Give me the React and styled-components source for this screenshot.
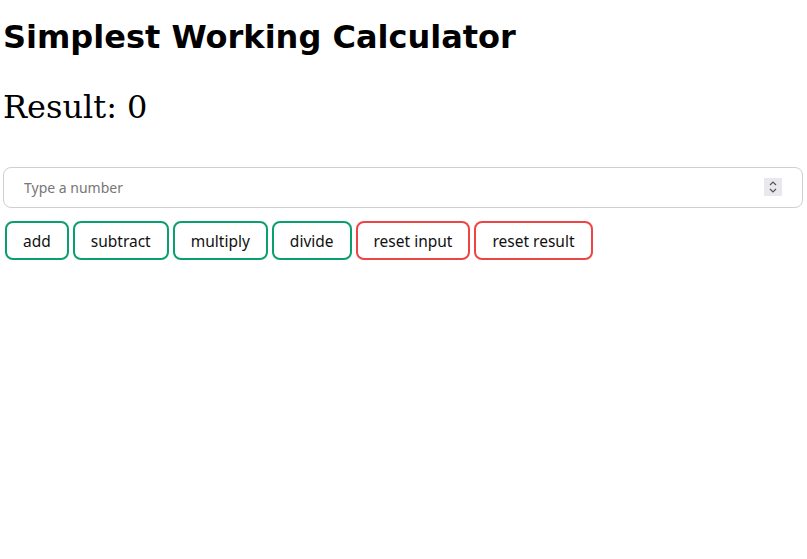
import styled, { createGlobalStyle } from "styled-components";

const GlobalStyle = createGlobalStyle`
  body {
    margin: 0;
    background: #fff;
  }
`;

const Page = styled.main`
  padding: 0 4px 0 3px;
`;

const Heading = styled.h1`
  font-family: "DejaVu Sans", sans-serif;
  font-weight: bold;
  font-size: 32px;
  margin: 18px 0 0;
  color: #000;
`;

const Result = styled.p`
  font-family: "DejaVu Serif", serif;
  font-size: 32px;
  margin: 32px 0 0;
  color: #000;
`;

const Form = styled.form`
  margin-top: 41px;
`;

const Field = styled.div`
  position: relative;
`;

const NumberInput = styled.input`
  box-sizing: border-box;
  width: 100%;
  height: 41px;
  border: 1px solid #cfcfcf;
  border-radius: 8px;
  padding: 0 20px;
  font-family: "Noto Sans", sans-serif;
  font-size: 14px;
  color: #222;
  outline: none;
  -moz-appearance: textfield;
  &::placeholder {
    color: #777;
  }
  &::-webkit-inner-spin-button,
  &::-webkit-outer-spin-button {
    -webkit-appearance: none;
    margin: 0;
  }
`;

const Spinner = styled.span`
  position: absolute;
  right: 21px;
  top: 11px;
  width: 18px;
  height: 18px;
  background: #e9e9ed;
  display: flex;
  align-items: center;
  justify-content: center;
`;

const Buttons = styled.div`
  display: flex;
  gap: 4px;
  padding: 13px 2px 0;
`;

const Button = styled.button`
  box-sizing: border-box;
  height: 39px;
  padding: 0 16px;
  background: #fff;
  border: 2px solid ${(p) => (p.$danger ? "#ef4444" : "#0a9f6e")};
  border-radius: 8px;
  font-family: "Noto Sans", sans-serif;
  font-size: 15.5px;
  color: #111;
  cursor: pointer;
`;

export default function App() {
  return (
    <Page>
      <GlobalStyle />
      <Heading>Simplest Working Calculator</Heading>
      <Result>Result: 0</Result>
      <Form onSubmit={(e) => e.preventDefault()}>
        <Field>
          <NumberInput type="number" placeholder="Type a number" />
          <Spinner>
            <svg width="10" height="14" viewBox="0 0 10 14" fill="none" stroke="#555" strokeWidth="1.2">
              <path d="M2 5 L5 2 L8 5" />
              <path d="M2 9 L5 12 L8 9" />
            </svg>
          </Spinner>
        </Field>
        <Buttons>
          <Button type="button">add</Button>
          <Button type="button">subtract</Button>
          <Button type="button">multiply</Button>
          <Button type="button">divide</Button>
          <Button type="button" $danger>reset input</Button>
          <Button type="button" $danger>reset result</Button>
        </Buttons>
      </Form>
    </Page>
  );
}
